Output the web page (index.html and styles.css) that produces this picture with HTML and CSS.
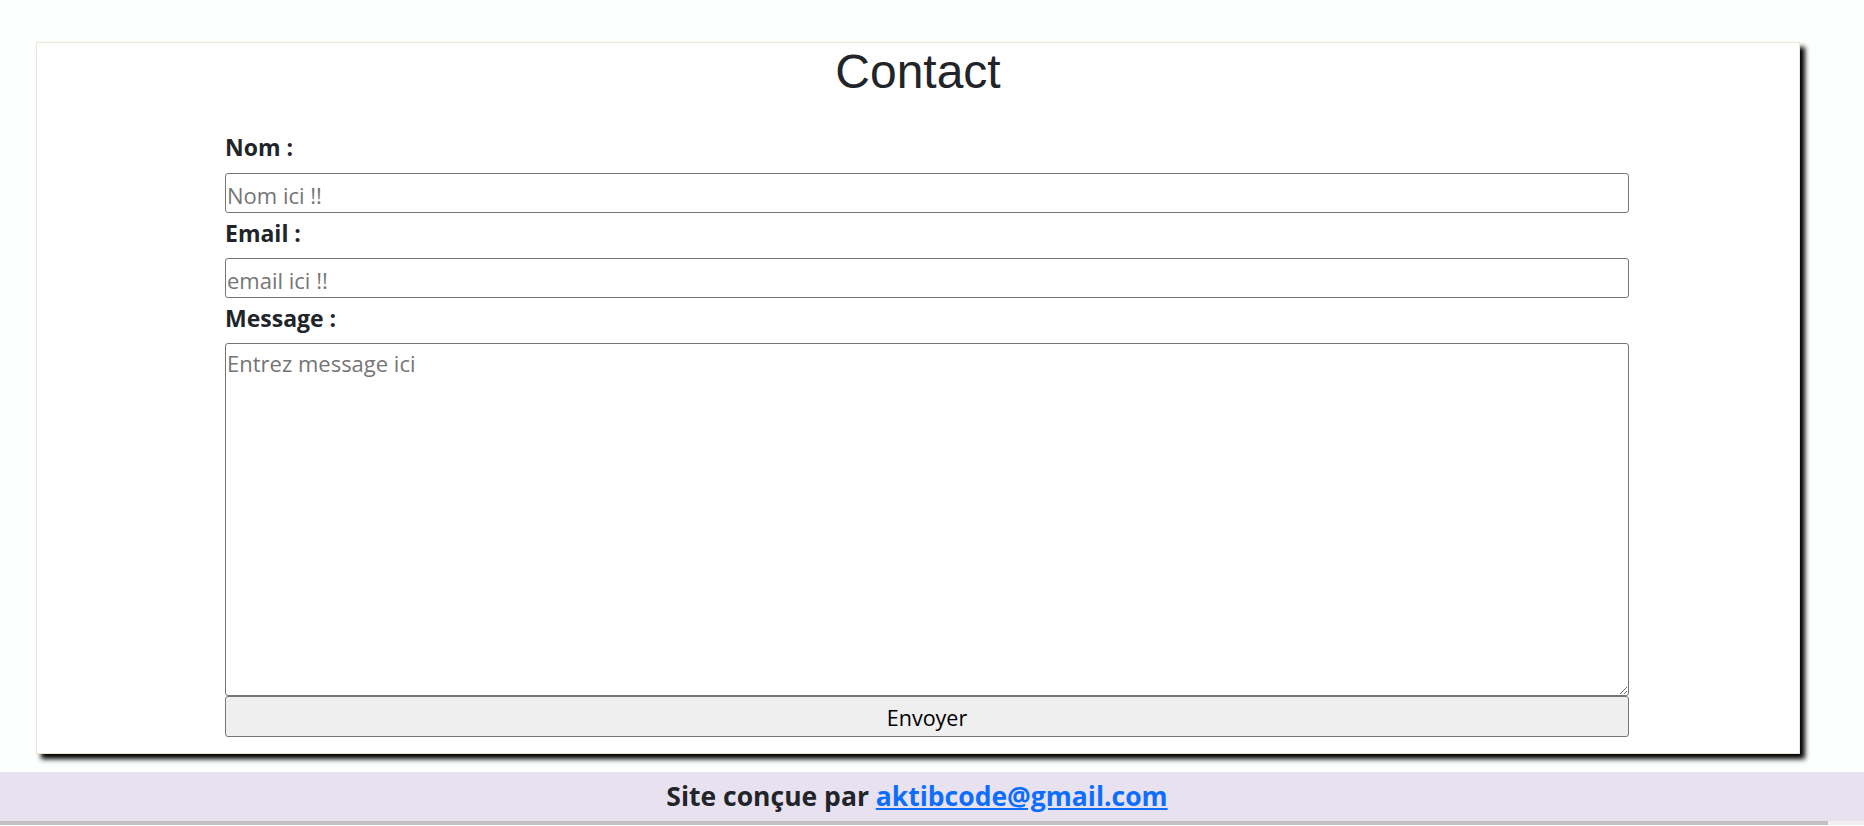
FILE: index.html
```html
<!DOCTYPE html>
<html lang="fr">
<head>
<meta charset="utf-8">
<title>Contact</title>
<link rel="stylesheet" href="styles.css">
</head>
<body>
<main class="page">
  <section class="card">
    <h1 class="title">Contact</h1>
    <form class="form">
      <label class="label label-first" for="nom">Nom :</label>
      <input class="field" id="nom" type="text" placeholder="Nom ici !!">
      <label class="label" for="email">Email :</label>
      <input class="field" id="email" type="email" placeholder="email ici !!">
      <label class="label" for="msg">Message :</label>
      <textarea class="area" id="msg" placeholder="Entrez message ici"></textarea>
      <button class="btn" type="button">Envoyer</button>
    </form>
  </section>
</main>
<footer class="footer">
  <p class="footer-text">Site conçue par <a class="footer-link" href="#">aktibcode@gmail.com</a></p>
</footer>
<div class="scrollbar"><div class="thumb"></div></div>
</body>
</html>
```
FILE: styles.css
```css
html, body {
  margin: 0;
  padding: 0;
  background: #fdfefe;
  font-family: "Open Sans", "Noto Sans", sans-serif;
  color: #212529;
  overflow: hidden;
}
.page {
  padding-top: 42px;
}
.card {
  margin-left: 36px;
  width: 1762px;
  border: 1px solid #efe5d5;
  background: #fff;
  box-shadow: 5px 5px 5px #000;
  padding-bottom: 16px;
}
.title {
  margin: 0;
  font-family: "Liberation Sans", Arial, sans-serif;
  font-weight: 400;
  font-size: 48px;
  line-height: 57.6px;
  text-align: center;
  color: #212529;
}
.form {
  display: flex;
  flex-direction: column;
  margin-left: 188px;
  width: 1404px;
}
.label {
  display: block;
  font-weight: 700;
  font-size: 23px;
  line-height: 30px;
  margin: 5px 0 10px;
  color: #212529;
}
.label-first {
  margin-top: 31px;
  margin-bottom: 11px;
}
.field, .area, .btn {
  box-sizing: border-box;
  width: 100%;
  border: 1px solid #767676;
  border-radius: 3px;
  font-family: "Open Sans", "Noto Sans", sans-serif;
  font-size: 22px;
  margin: 0;
  color: #000;
}
.field {
  height: 40px;
  padding: 4px 1px 0;
  background: #fff;
}
.area {
  height: 353px;
  padding: 4px 1px 2px;
  resize: vertical;
  background: #fff;
  display: block;
}
.field::placeholder, .area::placeholder {
  color: #757575;
}
.btn {
  height: 41px;
  background: #efefef;
  padding: 3px 0 0;
  font-size: 21.5px;
}
.footer {
  margin-top: 18px;
  height: 49px;
  background: #e8e2f0;
  display: flex;
  align-items: center;
  justify-content: center;
  padding-right: 30px;
}
.footer-text {
  margin: 0;
  font-weight: 700;
  font-size: 26.5px;
  color: #212529;
}
.footer-link {
  color: #0d6efd;
  text-decoration: underline;
}
.scrollbar {
  height: 4px;
  background: #f1f1f1;
}
.thumb {
  width: 1828px;
  height: 4px;
  background: #c1c1c1;
}
```
